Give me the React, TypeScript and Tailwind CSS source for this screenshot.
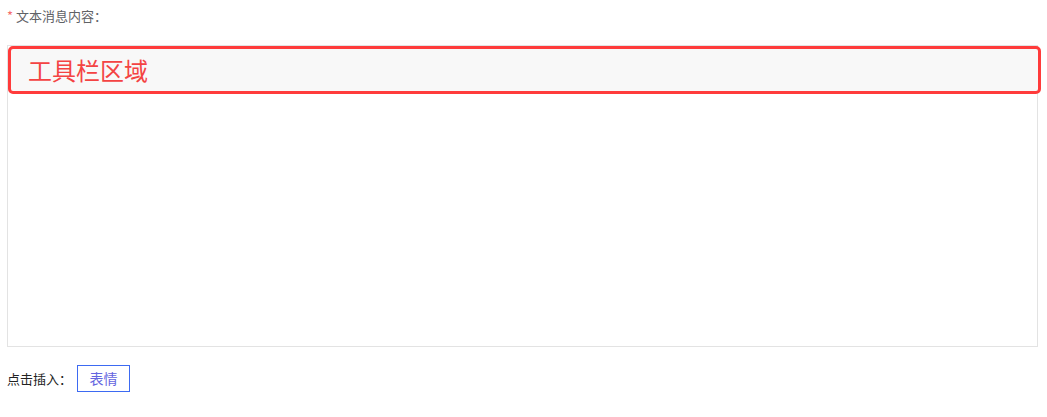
import React from 'react';

const font = { fontFamily: '"Noto Sans CJK SC", "Noto Sans", sans-serif' };

const App: React.FC = () => {
  return (
    <div className="w-[1047px] h-[417px] bg-white pl-[7px] pt-[6px]" style={font}>
      {/* Label */}
      <div className="flex items-center h-[20px] text-[13px] text-[#606266]">
        <span className="text-[#f56c6c] mr-[3px]">*</span>
        <span>文本消息内容：</span>
      </div>

      {/* Editor */}
      <div className="mt-[19px] w-[1031px] h-[302px] border border-[#e3e3e3]">
        <div className="w-[1033px] h-[48px] border-[3px] border-[#ff3b3b] rounded-[5px] bg-[#f8f8f8] flex items-center pl-[17px]">
          <span className="text-[24px] leading-none text-[#f44343]">工具栏区域</span>
        </div>
      </div>

      {/* Insert row */}
      <div className="mt-[18px] flex items-center">
        <span className="text-[13px] text-[#222]">点击插入：</span>
        <div className="ml-[5px] w-[53px] h-[27px] ring-1 ring-inset ring-[#3d6af2] text-[14px] text-[#6565e0] flex items-center justify-center bg-white">
          表情
        </div>
      </div>
    </div>
  );
};

export default App;
